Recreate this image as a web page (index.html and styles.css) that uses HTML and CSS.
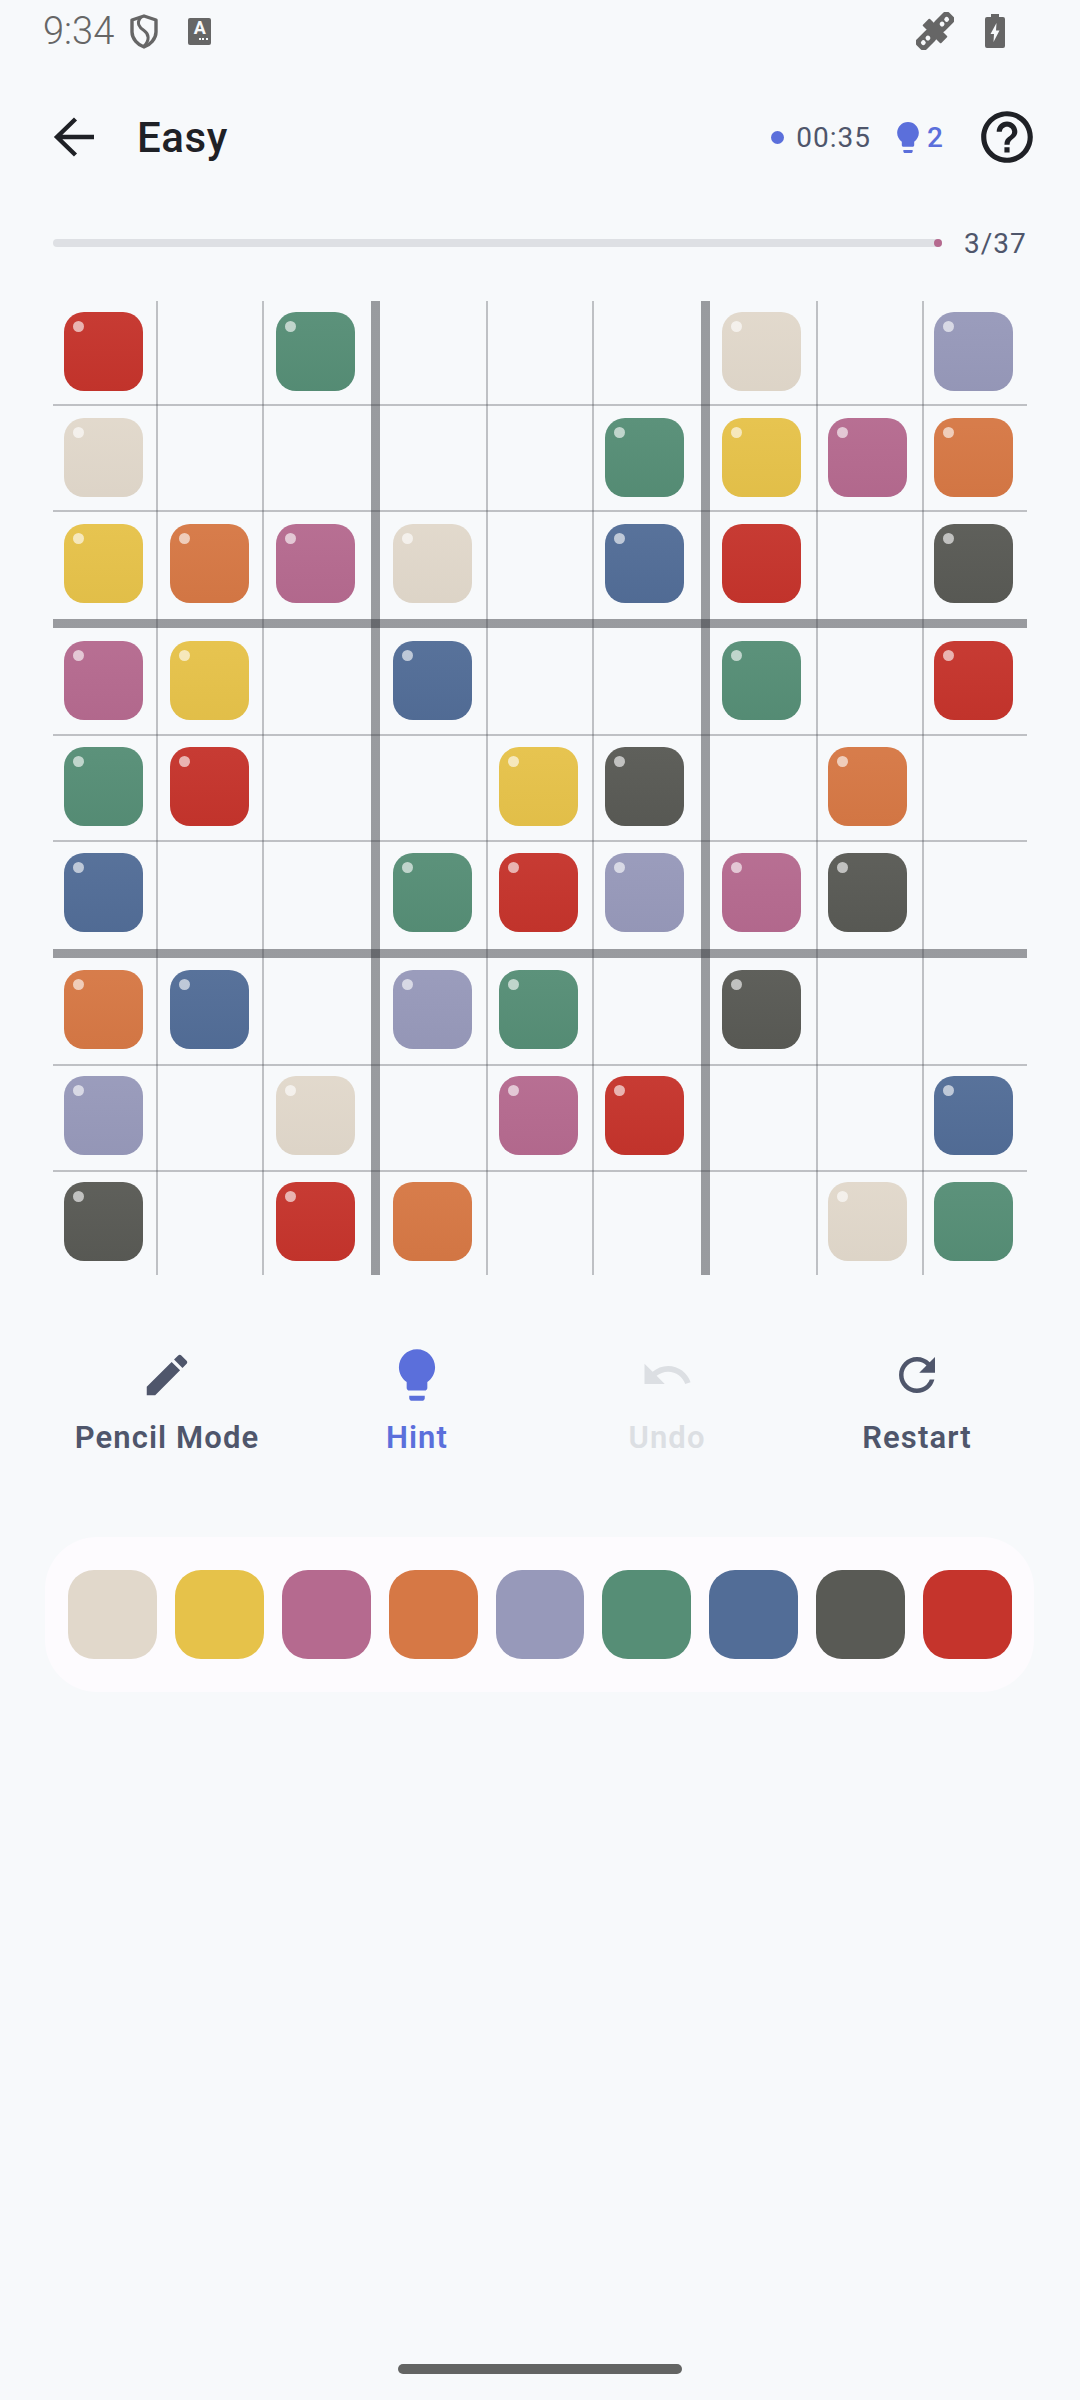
FILE: index.html
```html
<!DOCTYPE html>
<html lang="en">
<head>
    <meta charset="UTF-8">
    <title>Easy</title>
    <link rel="stylesheet" href="styles.css">
</head>
<body>
<div class="page">
    <div class="status">
        <span class="clock">9:34</span>
        <svg class="shield" viewBox="0 0 28 35"><path d="M14 2 26 6V18C26 25 20 31 14 33 8 31 2 25 2 18V6Z" fill="none" stroke="#666" stroke-width="3.4" stroke-linejoin="round"/><path d="M11 3C6 9 9 13 14 16.500 19 20 20 26 14 32" fill="none" stroke="#666" stroke-width="3"/></svg>
        <span class="ime">A</span>
        <svg class="sat" viewBox="0 0 38 38"><g transform="rotate(-45 19 19)"><rect x="-4" y="12" width="20" height="14" rx="4" fill="#666"/><rect x="22" y="12" width="20" height="14" rx="4" fill="#666"/><rect x="14" y="6" width="10" height="26" rx="1" fill="#666"/><circle cx="2.500" cy="19" r="2.400" fill="#f7f9fb"/><circle cx="9" cy="19" r="2.400" fill="#f7f9fb"/><circle cx="29" cy="19" r="2.400" fill="#f7f9fb"/><circle cx="35.500" cy="19" r="2.400" fill="#f7f9fb"/></g></svg>
        <svg class="battery" viewBox="0 0 20 34"><path d="M6 0H14V3H18Q20 3 20 5V32Q20 34 18 34H2Q0 34 0 32V5Q0 3 2 3H6Z" fill="#666"/><path d="M11.500 9 5.500 20H9L8.500 28 14.500 16.500H11Z" fill="#f7f9fb"/></svg>
    </div>

    <div class="header">
        <svg class="back" viewBox="0 0 42 42"><path d="M41 21H4M22.500 3 4 21 22.500 39" fill="none" stroke="#1f2126" stroke-width="4.400"/></svg>
        <h1 class="title">Easy</h1>
        <div class="stats">
            <span class="timer-dot"></span>
            <span class="timer">00:35</span>
            <svg class="bulb-small" viewBox="5 2 14 20"><path d="M9 21c0 .55.45 1 1 1h4c.55 0 1-.45 1-1v-1H9v1zm3-19C8.140 2 5 5.140 5 9c0 2.380 1.190 4.470 3 5.740V17c0 .55.45 1 1 1h6c.55 0 1-.45 1-1v-2.260c1.810-1.270 3-3.360 3-5.740 0-3.860-3.140-7-7-7z"/></svg>
            <span class="hints">2</span>
        </div>
        <svg class="help" viewBox="0 0 24 24"><path d="M11 18h2v-2h-2v2zm1-16C6.480 2 2 6.480 2 12s4.480 10 10 10 10-4.480 10-10S17.520 2 12 2zm0 18c-4.410 0-8-3.590-8-8s3.590-8 8-8 8 3.590 8 8-3.590 8-8 8zm0-14c-2.210 0-4 1.790-4 4h2c0-1.100.9-2 2-2s2 .9 2 2c0 2-3 1.750-3 5h2c0-2.250 3-2.500 3-5 0-2.210-1.790-4-4-4z"/></svg>
    </div>

    <div class="progress">
        <div class="track"><span class="track-dot"></span></div>
        <span class="count">3/37</span>
    </div>

    <div class="board">
        <div class="tile given red"></div><div></div><div class="tile given green"></div><div></div><div></div><div></div><div class="tile given beige"></div><div></div><div class="tile given lilac"></div>
        <div class="tile given beige"></div><div></div><div></div><div></div><div></div><div class="tile given green"></div><div class="tile given yellow"></div><div class="tile given pink"></div><div class="tile given orange"></div>
        <div class="tile given yellow"></div><div class="tile given orange"></div><div class="tile given pink"></div><div class="tile given beige"></div><div></div><div class="tile given blue"></div><div class="tile red"></div><div></div><div class="tile given dark"></div>
        <div class="tile given pink"></div><div class="tile given yellow"></div><div></div><div class="tile given blue"></div><div></div><div></div><div class="tile given green"></div><div></div><div class="tile given red"></div>
        <div class="tile given green"></div><div class="tile given red"></div><div></div><div></div><div class="tile given yellow"></div><div class="tile given dark"></div><div></div><div class="tile given orange"></div><div></div>
        <div class="tile given blue"></div><div></div><div></div><div class="tile given green"></div><div class="tile given red"></div><div class="tile given lilac"></div><div class="tile given pink"></div><div class="tile given dark"></div><div></div>
        <div class="tile given orange"></div><div class="tile given blue"></div><div></div><div class="tile given lilac"></div><div class="tile given green"></div><div></div><div class="tile given dark"></div><div></div><div></div>
        <div class="tile given lilac"></div><div></div><div class="tile given beige"></div><div></div><div class="tile given pink"></div><div class="tile given red"></div><div></div><div></div><div class="tile given blue"></div>
        <div class="tile given dark"></div><div></div><div class="tile given red"></div><div class="tile orange"></div><div></div><div></div><div></div><div class="tile given beige"></div><div class="tile green"></div>
    </div>

    <div class="actions">
        <div class="action">
            <svg class="icon" viewBox="0 0 24 24"><path d="M3 17.250V21h3.750L17.810 9.940l-3.750-3.750L3 17.250zM20.710 7.040c.39-.39.39-1.020 0-1.410l-2.340-2.340c-.39-.39-1.020-.39-1.410 0l-1.830 1.830 3.750 3.750 1.830-1.830z"/></svg>
            <span class="label">Pencil Mode</span>
        </div>
        <div class="action hint">
            <svg class="icon" viewBox="0 0 24 24"><path d="M9 21c0 .55.45 1 1 1h4c.55 0 1-.45 1-1v-1H9v1zm3-19C8.140 2 5 5.140 5 9c0 2.380 1.190 4.470 3 5.740V17c0 .55.45 1 1 1h6c.55 0 1-.45 1-1v-2.260c1.810-1.270 3-3.360 3-5.740 0-3.860-3.140-7-7-7z"/></svg>
            <span class="label">Hint</span>
        </div>
        <div class="action off">
            <svg class="icon" viewBox="0 0 24 24"><path d="M12.500 8c-2.650 0-5.050.99-6.900 2.600L2 7v9h9l-3.620-3.620c1.390-1.160 3.160-1.880 5.120-1.880 3.540 0 6.550 2.310 7.600 5.500l2.370-.78C21.080 11.030 17.150 8 12.500 8z"/></svg>
            <span class="label">Undo</span>
        </div>
        <div class="action">
            <svg class="icon" viewBox="0 0 24 24"><path d="M17.650 6.350C16.200 4.900 14.210 4 12 4c-4.420 0-7.990 3.580-7.990 8s3.570 8 7.990 8c3.730 0 6.840-2.550 7.730-6h-2.080c-.82 2.330-3.040 4-5.650 4-3.310 0-6-2.690-6-6s2.690-6 6-6c1.660 0 3.140.69 4.220 1.780L13 11h7V4l-2.350 2.350z"/></svg>
            <span class="label">Restart</span>
        </div>
    </div>

    <div class="palette">
        <div class="swatch beige"></div>
        <div class="swatch yellow"></div>
        <div class="swatch pink"></div>
        <div class="swatch orange"></div>
        <div class="swatch lilac"></div>
        <div class="swatch green"></div>
        <div class="swatch blue"></div>
        <div class="swatch dark"></div>
        <div class="swatch red"></div>
    </div>

    <div class="home-bar"></div>
</div>
</body>
</html>
```

FILE: styles.css
```css
*{
    padding: 0;
    margin: 0;
    box-sizing: border-box;
}
body{
    background: #f7f9fb;
    font-family: Roboto, "Liberation Sans", sans-serif;
}
.page{
    width: 1080px;
    height: 2400px;
    display: flex;
    flex-direction: column;
}

/* status bar */
.status{
    height: 62px;
    padding: 0 75px 0 43px;
    display: flex;
    align-items: center;
}
.clock{
    font-size: 38px;
    font-weight: 300;
    color: #666;
}
.shield{
    width: 28px;
    height: 35px;
    margin-left: 16px;
}
.ime{
    width: 23px;
    height: 27px;
    margin-left: 30px;
    padding-top: 1px;
    background: #666;
    border-radius: 2px;
    color: #f7f9fb;
    font-size: 18px;
    font-weight: 700;
    line-height: 18px;
    text-align: center;
    display: flex;
    flex-direction: column;
    align-items: center;
}
.ime::after{
    content: "";
    width: 9px;
    margin: 1px 0 0 8px;
    border-bottom: 2px dotted #f7f9fb;
}
.sat{
    width: 38px;
    height: 38px;
    margin-left: auto;
}
.battery{
    width: 20px;
    height: 34px;
    margin-left: 31px;
}

/* header */
.header{
    height: 150px;
    padding: 0 42px 0 53px;
    display: flex;
    align-items: center;
}
.back{
    width: 42px;
    height: 42px;
}
.title{
    margin-left: 42px;
    font-size: 42px;
    font-weight: 500;
    color: #1f2126;
    letter-spacing: 0.6px;
}
.stats{
    margin-left: auto;
    display: flex;
    align-items: center;
}
.timer-dot{
    width: 13px;
    height: 13px;
    border-radius: 50%;
    background: #5b6fdb;
}
.timer{
    margin-left: 12px;
    font-size: 28px;
    color: #4f566b;
    letter-spacing: 1px;
}
.bulb-small{
    width: 22px;
    height: 31px;
    margin-left: 26px;
    fill: #5b6fdb;
}
.hints{
    margin-left: 8px;
    font-size: 28px;
    font-weight: 500;
    color: #5b6fdb;
}
.help{
    width: 62px;
    height: 62px;
    margin-left: 33px;
    fill: #1f2126;
}

/* progress */
.progress{
    height: 62px;
    padding-left: 53px;
    display: flex;
    align-items: center;
}
.track{
    width: 889px;
    height: 8px;
    border-radius: 4px;
    background: #dee0e4;
    display: flex;
    justify-content: flex-end;
}
.track-dot{
    width: 8px;
    height: 8px;
    border-radius: 50%;
    background: #b56a8f;
}
.count{
    margin-left: 22px;
    font-size: 28px;
    color: #4f566b;
    letter-spacing: 1px;
}

/* board: the lines are background layers so they get darker where they cross */
.board{
    --thin: linear-gradient(rgba(60, 62, 70, 0.3), rgba(60, 62, 70, 0.3));
    --thick: linear-gradient(rgba(50, 52, 58, 0.48), rgba(50, 52, 58, 0.48));
    width: 974px;
    height: 974px;
    margin: 27px 0 0 53px;
    padding: 11px 0 0 11px;
    display: grid;
    grid-template-columns: 106px 106px 117px 106px 106px 117px 106px 106px 79px;
    grid-template-rows: 106px 106px 117px 106px 106px 117px 106px 106px 79px;
    background-image:
        var(--thin), var(--thin), var(--thick), var(--thin), var(--thin), var(--thick), var(--thin), var(--thin),
        var(--thin), var(--thin), var(--thick), var(--thin), var(--thin), var(--thick), var(--thin), var(--thin);
    background-repeat: no-repeat;
    background-size:
        2px 100%, 2px 100%, 9px 100%, 2px 100%, 2px 100%, 9px 100%, 2px 100%, 2px 100%,
        100% 2px, 100% 2px, 100% 9px, 100% 2px, 100% 2px, 100% 9px, 100% 2px, 100% 2px;
    background-position:
        103px 0, 209px 0, 318px 0, 433px 0, 539px 0, 648px 0, 763px 0, 869px 0,
        0 103px, 0 209px, 0 318px, 0 433px, 0 539px, 0 648px, 0 763px, 0 869px;
}
.tile{
    width: 79px;
    height: 79px;
    padding: 9px;
    border-radius: 20px;
    background-image: linear-gradient(rgba(255, 255, 255, 0.035), rgba(0, 0, 0, 0.02));
}
.given::before{
    content: "";
    display: block;
    width: 11px;
    height: 11px;
    border-radius: 50%;
    background: rgba(255, 255, 255, 0.62);
}
.beige{ background-color: #e1d8cb; }
.yellow{ background-color: #e6c24a; }
.pink{ background-color: #b56a8f; }
.orange{ background-color: #d67845; }
.lilac{ background-color: #9799ba; }
.green{ background-color: #568e76; }
.blue{ background-color: #526d97; }
.dark{ background-color: #595a55; }
.red{ background-color: #c5342c; }

/* actions */
.actions{
    margin: 69px 0 0 42px;
    display: grid;
    grid-template-columns: repeat(4, 250px);
}
.action{
    display: flex;
    flex-direction: column;
    align-items: center;
    color: #4f566b;
    fill: #4f566b;
}
.action.hint{
    color: #5b6fdb;
    fill: #5b6fdb;
}
.action.off{
    color: #dcdfe3;
    fill: #dcdfe3;
}
.icon{
    width: 54px;
    height: 62px;
}
.hint .icon{
    width: 62px;
}
.label{
    margin-top: 14px;
    font-size: 31px;
    font-weight: 600;
    line-height: 36px;
    letter-spacing: 1.1px;
}

/* colour picker */
.palette{
    width: 989px;
    height: 155px;
    margin: 81px 0 0 45px;
    padding: 0 22px 0 23px;
    border-radius: 52px;
    background: #fdfbfe;
    display: flex;
    align-items: center;
    gap: 18px;
}
.swatch{
    width: 89px;
    height: 89px;
    border-radius: 26px;
}

.home-bar{
    width: 284px;
    height: 10px;
    margin: auto 0 26px 398px;
    border-radius: 5px;
    background: #636463;
}
```
